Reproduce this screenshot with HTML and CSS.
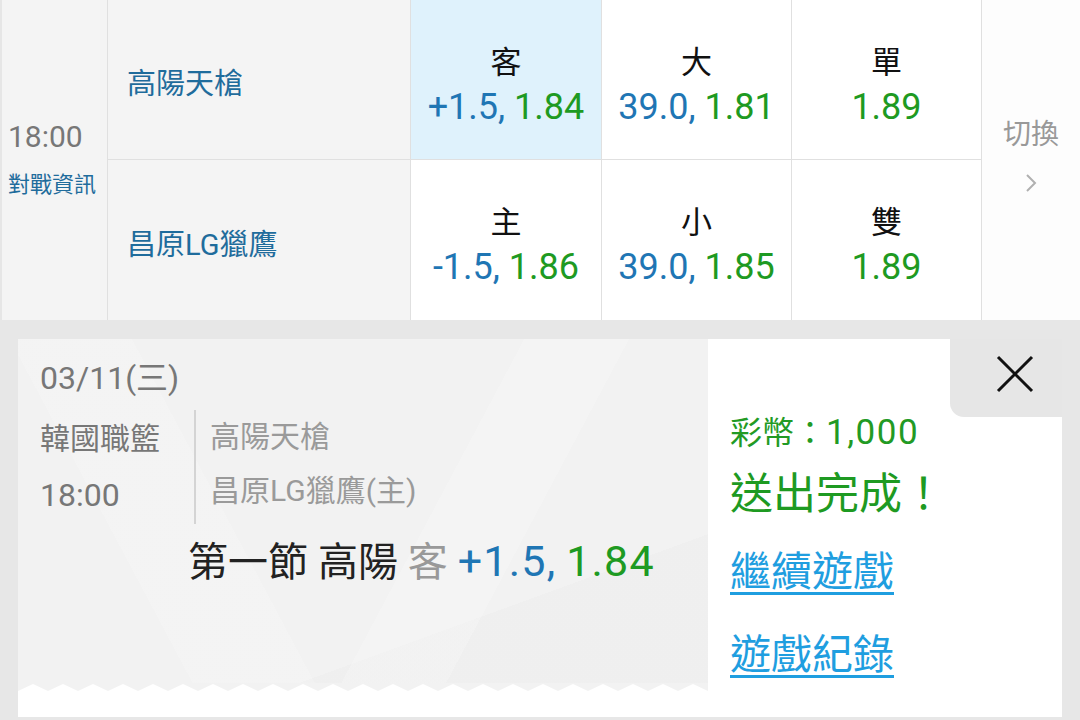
FILE: index.html
```html
<!DOCTYPE html>
<html lang="zh-Hant">
<head>
<meta charset="utf-8">
<title>投注完成</title>
<link rel="stylesheet" href="styles.css">
</head>
<body>
<div class="board">
  <div class="cell time-cell">
    <div class="time">18:00</div>
    <div class="info-link">對戰資訊</div>
  </div>
  <div class="cell team row-top">高陽天槍</div>
  <div class="cell odds row-top selected">
    <div class="label">客</div>
    <div class="val"><span class="blue">+1.5,</span> <span class="green">1.84</span></div>
  </div>
  <div class="cell odds row-top">
    <div class="label">大</div>
    <div class="val"><span class="blue">39.0,</span> <span class="green">1.81</span></div>
  </div>
  <div class="cell odds row-top">
    <div class="label">單</div>
    <div class="val"><span class="green">1.89</span></div>
  </div>
  <div class="cell switch">
    <div class="switch-text">切換</div>
    <svg class="chevron" width="12" height="20" viewBox="0 0 12 20"><path d="M2 2 L10 10 L2 18" fill="none" stroke="#b0b0b0" stroke-width="2"/></svg>
  </div>
  <div class="cell team">昌原LG獵鷹</div>
  <div class="cell odds">
    <div class="label">主</div>
    <div class="val"><span class="blue">-1.5,</span> <span class="green">1.86</span></div>
  </div>
  <div class="cell odds">
    <div class="label">小</div>
    <div class="val"><span class="blue">39.0,</span> <span class="green">1.85</span></div>
  </div>
  <div class="cell odds">
    <div class="label">雙</div>
    <div class="val"><span class="green">1.89</span></div>
  </div>
</div>

<div class="lower">
  <div class="panel">
    <div class="slip">
      <div class="slip-body">
        <div class="date">03/11(三)</div>
        <div class="match">
          <div class="league">
            <div>韓國職籃</div>
            <div class="num">18:00</div>
          </div>
          <div class="teams">
            <div>高陽天槍</div>
            <div>昌原LG獵鷹(主)</div>
          </div>
        </div>
        <div class="bet"><span class="dark">第一節 高陽</span> <span class="grey">客</span> <span class="blue bet-num">+1.5,</span> <span class="green bet-num">1.84</span></div>
      </div>
      <svg class="zigzag" width="690" height="8" viewBox="0 0 690 8" preserveAspectRatio="none">
        <defs>
          <pattern id="zz" width="30" height="8" patternUnits="userSpaceOnUse">
            <polygon points="0,0 30,0 30,8 15,1 0,8" fill="#f2f2f2"/>
          </pattern>
        </defs>
        <rect width="690" height="8" fill="url(#zz)"/>
      </svg>
      <div class="slip-foot"></div>
    </div>
    <div class="result">
      <div class="coins">彩幣：<span class="coin-num">1,000</span></div>
      <div class="done">送出完成！</div>
      <a class="link first" href="#">繼續遊戲</a>
      <a class="link" href="#">遊戲紀錄</a>
    </div>
    <div class="close">
      <svg width="38" height="38" viewBox="0 0 38 38"><path d="M2 2 L36 36 M36 2 L2 36" stroke="#111" stroke-width="3" fill="none"/></svg>
    </div>
  </div>
</div>
</body>
</html>
```
FILE: styles.css
```css
html, body {
  margin: 0;
  padding: 0;
}
body {
  width: 1080px;
  height: 720px;
  overflow: hidden;
  background: #e7e7e7;
  font-family: Roboto, "Noto Sans CJK TC", sans-serif;
}

.board {
  display: grid;
  grid-template-columns: 108px 303px 191px 190px 190px 98px;
  grid-template-rows: 160px 160px;
  height: 320px;
  background: #fff;
}
.cell {
  box-sizing: border-box;
  border-right: 1px solid #e0e0e0;
}
.row-top {
  border-bottom: 1px solid #e0e0e0;
}
.time-cell {
  grid-row: span 2;
  background: #f4f4f4;
  border-left: 2px solid #e6e6e6;
  display: flex;
  flex-direction: column;
  justify-content: center;
  padding: 0 0 0 6px;
}
.time {
  font-size: 30px;
  line-height: 40px;
  color: #777;
}
.info-link {
  margin-top: 10px;
  font-size: 22px;
  line-height: 36px;
  color: #1f6c9c;
}
.team {
  background: #f4f4f4;
  display: flex;
  align-items: center;
  padding: 3px 0 0 19px;
  font-size: 29px;
  color: #1f6c9c;
}
.odds {
  display: flex;
  flex-direction: column;
  align-items: center;
  justify-content: center;
  padding-top: 12px;
}
.odds .label {
  font-size: 31px;
  line-height: 42px;
  color: #111;
}
.odds .val {
  font-size: 36px;
  line-height: 46px;
}
.selected {
  background: #dff2fc;
}
.switch {
  grid-row: span 2;
  border-right: none;
  background: #fdfdfd;
  display: flex;
  flex-direction: column;
  align-items: center;
  justify-content: center;
  padding-bottom: 12px;
}
.switch-text {
  font-size: 28px;
  line-height: 40px;
  color: #999;
}
.chevron {
  margin-top: 18px;
}
.blue { color: #1f76b4; }
.green { color: #1e9a22; }
.grey { color: #999; }
.dark { color: #222; }

.lower {
  padding: 19px 18px 3px;
}
.panel {
  position: relative;
  display: flex;
  height: 378px;
  background: #fff;
}
.slip {
  width: 690px;
  display: flex;
  flex-direction: column;
}
.slip-body {
  height: 344px;
  box-sizing: border-box;
  padding: 18px 0 0 22px;
  background-color: #f2f2f2;
  background-image:
    linear-gradient(118deg, rgba(255,255,255,0) 0 58%, rgba(255,255,255,0.18) 58% 70%, rgba(255,255,255,0) 70%),
    linear-gradient(62deg, rgba(255,255,255,0) 0 20%, rgba(255,255,255,0.14) 20% 34%, rgba(255,255,255,0) 34%),
    linear-gradient(160deg, rgba(0,0,0,0) 0 75%, rgba(0,0,0,0.01) 75%);
}
.zigzag {
  display: block;
}
.slip-foot {
  flex: 1;
  background: #fff;
}
.date {
  font-size: 32px;
  line-height: 42px;
  color: #777;
}
.match {
  display: flex;
  margin-top: 11px;
}
.league {
  width: 154px;
  font-size: 30px;
  line-height: 57px;
  color: #777;
}
.league .num {
  font-size: 32px;
}
.teams {
  border-left: 2px solid #d4d4d4;
  padding-left: 14px;
  font-size: 30px;
  line-height: 54px;
  color: #9a9a9a;
}
.bet {
  margin: 11px 0 0 148px;
  font-size: 40px;
  line-height: 52px;
}
.bet-num {
  font-size: 43px;
  letter-spacing: 1.2px;
}

.result {
  flex: 1;
  display: flex;
  flex-direction: column;
  align-items: flex-start;
  padding: 74px 0 0 22px;
}
.coins {
  font-size: 32px;
  line-height: 40px;
  color: #229a24;
}
.coin-num {
  font-size: 35px;
  letter-spacing: 1.5px;
}
.done {
  margin-top: 13px;
  font-size: 43px;
  line-height: 56px;
  color: #1e9a22;
}
.link {
  margin-top: 27px;
  font-size: 41px;
  line-height: 56px;
  color: #1f9ee0;
  text-decoration: underline;
  text-decoration-thickness: 3px;
  text-underline-offset: 6px;
}
.link.first {
  margin-top: 22px;
}
.close {
  position: absolute;
  top: 0;
  right: 0;
  width: 112px;
  height: 78px;
  box-sizing: border-box;
  padding: 16px 0 0 46px;
  background: #e6e6e6;
  border-bottom-left-radius: 14px;
}
.close svg {
  display: block;
}
```
